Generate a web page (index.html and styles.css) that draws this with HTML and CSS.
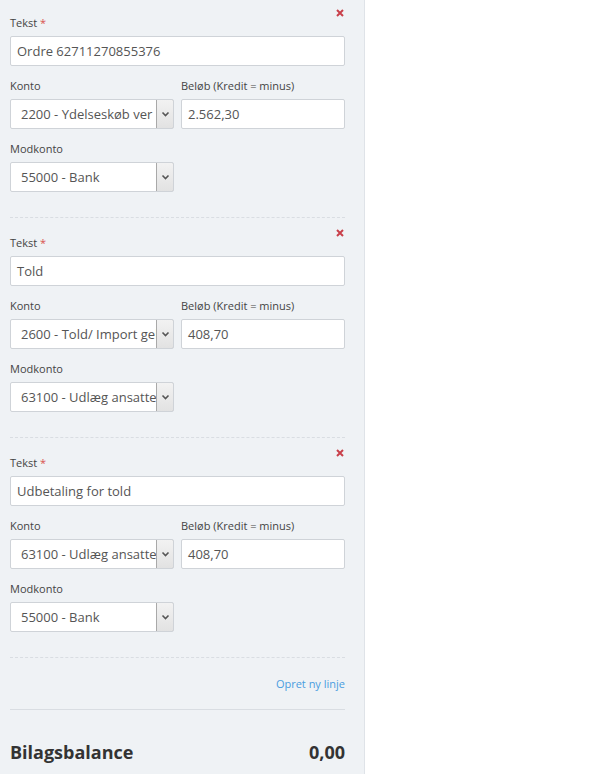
FILE: index.html
```html
<!DOCTYPE html>
<html lang="da">
<head>
<meta charset="utf-8">
<title>Bilag</title>
<link rel="stylesheet" href="styles.css">
</head>
<body>
<div class="panel">
  <div class="line">
    <button class="remove" aria-label="Fjern"><svg width="8" height="8" viewBox="0 0 8 8"><path d="M1 1L7 7M7 1L1 7" stroke="currentColor" stroke-width="2"/></svg></button>
    <div class="field">
      <label class="label">Tekst <span class="req">*</span></label>
      <div class="input">Ordre 62711270855376</div>
    </div>
    <div class="cols">
      <div class="field">
        <label class="label">Konto</label>
        <div class="select"><span class="sel-text">2200 - Ydelseskøb ver</span><span class="sel-btn"><svg width="9" height="6" viewBox="0 0 9 6"><path d="M1.5 1.5L4.5 4.5L7.5 1.5" fill="none" stroke="currentColor" stroke-width="1.6"/></svg></span></div>
      </div>
      <div class="field">
        <label class="label">Beløb (Kredit = minus)</label>
        <div class="input">2.562,30</div>
      </div>
    </div>
    <div class="cols">
      <div class="field">
        <label class="label">Modkonto</label>
        <div class="select"><span class="sel-text">55000 - Bank</span><span class="sel-btn"><svg width="9" height="6" viewBox="0 0 9 6"><path d="M1.5 1.5L4.5 4.5L7.5 1.5" fill="none" stroke="currentColor" stroke-width="1.6"/></svg></span></div>
      </div>
    </div>
  </div>

  <div class="line">
    <button class="remove" aria-label="Fjern"><svg width="8" height="8" viewBox="0 0 8 8"><path d="M1 1L7 7M7 1L1 7" stroke="currentColor" stroke-width="2"/></svg></button>
    <div class="field">
      <label class="label">Tekst <span class="req">*</span></label>
      <div class="input">Told</div>
    </div>
    <div class="cols">
      <div class="field">
        <label class="label">Konto</label>
        <div class="select"><span class="sel-text">2600 - Told/ Import gebyr</span><span class="sel-btn"><svg width="9" height="6" viewBox="0 0 9 6"><path d="M1.5 1.5L4.5 4.5L7.5 1.5" fill="none" stroke="currentColor" stroke-width="1.6"/></svg></span></div>
      </div>
      <div class="field">
        <label class="label">Beløb (Kredit = minus)</label>
        <div class="input">408,70</div>
      </div>
    </div>
    <div class="cols">
      <div class="field">
        <label class="label">Modkonto</label>
        <div class="select"><span class="sel-text">63100 - Udlæg ansatte</span><span class="sel-btn"><svg width="9" height="6" viewBox="0 0 9 6"><path d="M1.5 1.5L4.5 4.5L7.5 1.5" fill="none" stroke="currentColor" stroke-width="1.6"/></svg></span></div>
      </div>
    </div>
  </div>

  <div class="line">
    <button class="remove" aria-label="Fjern"><svg width="8" height="8" viewBox="0 0 8 8"><path d="M1 1L7 7M7 1L1 7" stroke="currentColor" stroke-width="2"/></svg></button>
    <div class="field">
      <label class="label">Tekst <span class="req">*</span></label>
      <div class="input">Udbetaling for told</div>
    </div>
    <div class="cols">
      <div class="field">
        <label class="label">Konto</label>
        <div class="select"><span class="sel-text">63100 - Udlæg ansatte</span><span class="sel-btn"><svg width="9" height="6" viewBox="0 0 9 6"><path d="M1.5 1.5L4.5 4.5L7.5 1.5" fill="none" stroke="currentColor" stroke-width="1.6"/></svg></span></div>
      </div>
      <div class="field">
        <label class="label">Beløb (Kredit = minus)</label>
        <div class="input">408,70</div>
      </div>
    </div>
    <div class="cols">
      <div class="field">
        <label class="label">Modkonto</label>
        <div class="select"><span class="sel-text">55000 - Bank</span><span class="sel-btn"><svg width="9" height="6" viewBox="0 0 9 6"><path d="M1.5 1.5L4.5 4.5L7.5 1.5" fill="none" stroke="currentColor" stroke-width="1.6"/></svg></span></div>
      </div>
    </div>
  </div>

  <div class="actions"><a class="add-link" href="#">Opret ny linje</a></div>

  <div class="balance">
    <span>Bilagsbalance</span>
    <span>0,00</span>
  </div>
</div>
</body>
</html>
```

FILE: styles.css
```css
html, body {
  margin: 0;
  padding: 0;
  background: #ffffff;
}

body {
  font-family: "Open Sans", "DejaVu Sans", sans-serif;
  color: #444;
}

.panel {
  width: 365px;
  min-height: 774px;
  box-sizing: border-box;
  padding: 0 19px 0 10px;
  background: #eff2f5;
  border-right: 1px solid #dfe3e8;
}

.line {
  position: relative;
  padding: 17px 0 25px;
  border-bottom: 1px dashed #d9dde2;
}

.line:first-child {
  padding-top: 15px;
}

.remove {
  position: absolute;
  top: 9px;
  right: 1px;
  padding: 0;
  border: 0;
  background: none;
  color: #c9404a;
  line-height: 0;
  cursor: pointer;
}

.line:not(:first-child) .remove {
  top: 11px;
}

.field {
  display: flex;
  flex-direction: column;
  min-width: 0;
}

.line > .field,
.cols {
  margin-bottom: 12px;
}

.cols:last-child {
  margin-bottom: 0;
}

.cols {
  display: grid;
  grid-template-columns: 164px 1fr;
  gap: 7px;
}

.label {
  font-size: 11px;
  line-height: 16px;
  margin-bottom: 5px;
  color: #444;
}

.req {
  color: #d9534f;
}

.input,
.select {
  height: 30px;
  box-sizing: border-box;
  background: #fff;
  border: 1px solid #cfd3d8;
  border-radius: 2px;
  font-size: 13px;
  line-height: 28px;
  color: #555;
}

.input {
  padding: 0 6px;
}

.select {
  display: flex;
  overflow: hidden;
}

.sel-text {
  flex: 1;
  min-width: 0;
  padding-left: 10px;
  padding-right: 2px;
  white-space: nowrap;
  overflow: hidden;
}

.sel-btn {
  flex: none;
  width: 16px;
  display: flex;
  align-items: center;
  justify-content: center;
  background: linear-gradient(#f2f2f2, #e2e2e2);
  border: 1px solid #a9a9a9;
  margin: -1px -1px -1px 0;
  border-radius: 0 2px 2px 0;
  color: #555;
}

.actions {
  display: flex;
  justify-content: flex-end;
  padding: 18px 0 17px;
  border-bottom: 1px solid #d9dde2;
}

.add-link {
  font-size: 11px;
  line-height: 16px;
  color: #4a9de0;
  text-decoration: none;
}

.balance {
  display: flex;
  justify-content: space-between;
  align-items: center;
  padding-top: 30px;
  font-size: 18px;
  line-height: 24px;
  font-weight: 700;
  color: #333;
}
```
